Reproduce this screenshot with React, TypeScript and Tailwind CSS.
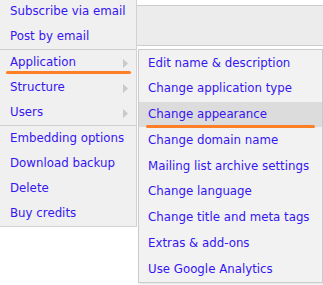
import React from "react";

const leftGroups: { label: string; sub?: boolean; mark?: boolean }[][] = [
  [{ label: "Subscribe via email" }, { label: "Post by email" }],
  [
    { label: "Application", sub: true, mark: true },
    { label: "Structure", sub: true },
    { label: "Users", sub: true },
  ],
  [
    { label: "Embedding options" },
    { label: "Download backup" },
    { label: "Delete" },
    { label: "Buy credits" },
  ],
];

const subItems = [
  "Edit name & description",
  "Change application type",
  "Change appearance",
  "Change domain name",
  "Mailing list archive settings",
  "Change language",
  "Change title and meta tags",
  "Extras & add-ons",
  "Use Google Analytics",
];

function Arrow() {
  return (
    <svg width="5" height="9" viewBox="0 0 5 9" className="shrink-0">
      <path d="M0 0 L5 4.5 L0 9 Z" fill="#c9c9c9" />
    </svg>
  );
}

export default function App() {
  return (
    <div
      className="w-[323px] h-[285px] bg-white overflow-hidden flex text-[11.8px] text-[#3515f2]"
      style={{ fontFamily: '"DejaVu Sans", Verdana, sans-serif' }}
    >
      {/* Main menu */}
      <div className="w-[137px] -mt-px self-start bg-[#f0f0f0] border-r border-b border-[#d2d2d2] shrink-0">
        {leftGroups.map((group, gi) => (
          <div
            key={gi}
            className={gi < leftGroups.length - 1 ? "border-b border-[#cfcfcf]" : ""}
          >
            {group.map((item) => (
              <div
                key={item.label}
                className="relative h-[25px] flex items-center justify-between pl-[10px] pr-[8px] pt-px"
              >
                <span>{item.label}</span>
                {item.sub && <Arrow />}
                {item.mark && (
                  <div className="absolute left-[6px] top-[21px] w-[125px] h-[3px] rounded-full bg-[#ff7f27]" />
                )}
              </div>
            ))}
          </div>
        ))}
      </div>

      {/* Right side */}
      <div className="flex-1 flex flex-col">
        <div className="h-[5px]" />
        <div className="h-[41px] bg-[#ececec] border-y border-[#cccccc]" />
        <div className="h-[3px]" />

        {/* Submenu */}
        <div className="ml-px w-[185px] bg-[#f2f2f2] border border-[#cbcbcb] shadow-[1px_1px_2px_rgba(0,0,0,0.12)]">
          {subItems.map((label) => {
            const active = label === "Change appearance";
            return (
              <div
                key={label}
                className={`relative h-[25.75px] flex items-center pl-[9px] pt-px ${
                  active ? "bg-[#dcdcdc]" : ""
                }`}
              >
                <span>{label}</span>
                {active && (
                  <div className="absolute left-[7px] top-[23px] w-[169px] h-[3px] rounded-full bg-[#ff7f27]" />
                )}
              </div>
            );
          })}
        </div>
      </div>
    </div>
  );
}
